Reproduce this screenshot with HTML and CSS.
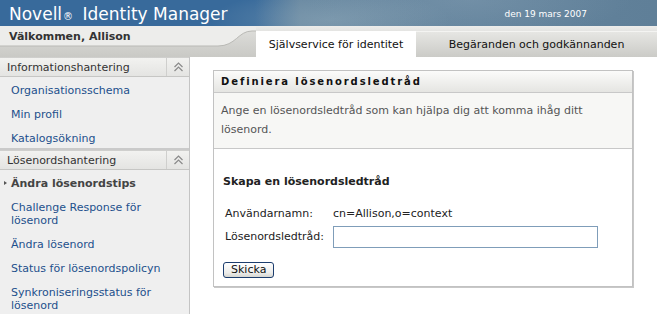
FILE: index.html
```html
<!DOCTYPE html>
<html lang="sv">
<head>
    <meta charset="UTF-8">
    <title>Novell Identity Manager</title>
    <link rel="stylesheet" href="styles.css">
</head>
<body>
    <div class="top">
        <div class="brand">Novell<span class="reg">®</span> Identity Manager</div>
        <div class="date">den 19 mars 2007</div>
    </div>

    <div class="nav">
        <div class="welcome">
            <svg class="curve" width="256" height="31" viewBox="0 0 256 31">
                <path d="M0 0 H256 V5 H252 C238 5 236 20 218 20 H0 Z" fill="#ededeb"/>
                <path d="M256 5 H252 C238 5 236 20 218 20 H0" fill="none" stroke="#b9b9b5" stroke-width="1"/>
            </svg>
            <span class="welcome-text">Välkommen, Allison</span>
        </div>
        <div class="tabs">
            <div class="tab active">Självservice för identitet</div>
            <div class="tab">Begäranden och godkännanden</div>
        </div>
    </div>

    <div class="main">
        <div class="side">
            <div class="group-head">
                <span>Informationshantering</span>
                <span class="toggle">
                    <svg width="11" height="10" viewBox="0 0 11 10"><path d="M1.5 5 L5.5 1 L9.5 5 M1.5 9 L5.5 5 L9.5 9" fill="none" stroke="#8a8a8a" stroke-width="1.2"/></svg>
                </span>
            </div>
            <div class="links">
                <a href="#">Organisationsschema</a>
                <a href="#">Min profil</a>
                <a href="#">Katalogsökning</a>
            </div>
            <div class="group-head">
                <span>Lösenordshantering</span>
                <span class="toggle">
                    <svg width="11" height="10" viewBox="0 0 11 10"><path d="M1.5 5 L5.5 1 L9.5 5 M1.5 9 L5.5 5 L9.5 9" fill="none" stroke="#8a8a8a" stroke-width="1.2"/></svg>
                </span>
            </div>
            <div class="links last">
                <a href="#" class="current">Ändra lösenordstips</a>
                <a href="#">Challenge Response för lösenord</a>
                <a href="#">Ändra lösenord</a>
                <a href="#">Status för lösenordspolicyn</a>
                <a href="#">Synkroniseringsstatus för lösenord</a>
            </div>
        </div>

        <div class="content">
            <div class="panel">
                <div class="panel-head">Definiera lösenordsledtråd</div>
                <div class="panel-desc">Ange en lösenordsledtråd som kan hjälpa dig att komma ihåg ditt lösenord.</div>
                <div class="panel-body">
                    <h2>Skapa en lösenordsledtråd</h2>
                    <div class="row">
                        <span class="label">Användarnamn:</span>
                        <span class="value">cn=Allison,o=context</span>
                    </div>
                    <div class="row">
                        <span class="label">Lösenordsledtråd:</span>
                        <input type="text" class="hint">
                    </div>
                    <button class="send">Skicka</button>
                </div>
            </div>
        </div>
    </div>
</body>
</html>
```

FILE: styles.css
```css
body {
    margin: 0;
    font-family: "DejaVu Sans", Verdana, sans-serif;
    font-size: 11px;
    background: #fff;
    color: #333;
    height: 314px;
    overflow: hidden;
    display: flex;
    flex-direction: column;
}

.top {
    flex: 0 0 26px;
    display: flex;
    align-items: center;
    justify-content: space-between;
    background:
        radial-gradient(ellipse 120px 30px at 330px 20px, rgba(150,175,190,0.45), transparent),
        radial-gradient(ellipse 160px 40px at 470px 0px, rgba(140,165,185,0.35), transparent),
        linear-gradient(90deg, #386a9b 0, #386a9b 255px, #6787a0 300px, #5f7f98 100%);
    color: #fff;
}
.brand {
    font-size: 17px;
    padding-left: 9px;
    padding-top: 1px;
}
.reg {
    font-size: 10px;
    margin: 0 4px 0 1px;
}
.date {
    font-size: 9px;
    padding-right: 70px;
    padding-top: 2px;
}

.nav {
    flex: 0 0 31px;
    display: flex;
    background: linear-gradient(#e0e0dd, #c9c9c5);
}
.welcome {
    width: 256px;
    position: relative;
}
.curve {
    position: absolute;
    left: 0;
    top: 0;
}
.welcome-text {
    position: relative;
    display: block;
    padding: 4px 0 0 9px;
    font-weight: bold;
    font-size: 11px;
    color: #333;
}
.tabs {
    flex: 1;
    display: flex;
    padding-top: 5px;
    background: linear-gradient(#ededeb 0, #e4e4e2 5px);
}
.tab {
    display: flex;
    align-items: center;
    justify-content: center;
    font-size: 11px;
    color: #111;
    flex: 1;
    background: linear-gradient(#e6e6e3, #cbcbc7);
    border-top: 1px solid #f4f4f2;
}
.tab.active {
    flex: 0 0 160px;
    background: #fff;
    border-top-color: #fff;
}

.main {
    flex: 1;
    min-height: 0;
    display: flex;
}
.side {
    flex: 0 0 189px;
    background: #efefef;
    border-right: 1px solid #c4c4c4;
}
.group-head {
    display: flex;
    justify-content: space-between;
    height: 18px;
    background: linear-gradient(#f2f2f0, #e4e4e2);
    border-top: 1px solid #cfcfcd;
    border-bottom: 1px solid #c6c6c4;
    font-size: 11px;
    color: #333;
}
.group-head span:first-child {
    padding: 3px 0 0 7px;
}
.toggle {
    width: 22px;
    border-left: 1px solid #cfcfcd;
    display: flex;
    align-items: center;
    justify-content: center;
}
.links {
    display: flex;
    flex-direction: column;
    gap: 11px;
    padding: 7px 10px 3px 11px;
    border-bottom: 2px solid #cacaca;
}
.links.last {
    border-bottom: none;
}
.links a {
    color: #1d4f8c;
    font-size: 11px;
    line-height: 13px;
    text-decoration: none;
}
.links a.current {
    color: #444;
    font-weight: bold;
    position: relative;
}
.links a.current::before {
    content: "";
    position: absolute;
    left: -7px;
    top: 4px;
    border-left: 3px solid #555;
    border-top: 2.5px solid transparent;
    border-bottom: 2.5px solid transparent;
}

.content {
    flex: 1;
    padding: 13px 0 0 23px;
}
.panel {
    width: 418px;
    border: 1px solid #c2c2c2;
    box-shadow: 1px 1px 0 #c8c8c8;
}
.panel-head {
    height: 21px;
    line-height: 21px;
    padding-left: 7px;
    font-weight: bold;
    font-size: 10px;
    letter-spacing: 1.9px;
    color: #111;
    background: linear-gradient(#fbfbfa, #e5e5e2);
    border-bottom: 1px solid #c8c8c8;
}
.panel-desc {
    background: #f7f7f5;
    color: #555;
    font-size: 11px;
    line-height: 19px;
    padding: 8px 10px 0 7px;
    border-bottom: 1px solid #c8c8c8;
    height: 47px;
}
.panel-body {
    padding: 26px 8px 8px 9px;
}
.panel-body h2 {
    margin: 0 0 14px 0;
    font-size: 11px;
    color: #222;
}
.row {
    display: flex;
    align-items: center;
    height: 23px;
    padding-left: 2px;
    font-size: 11px;
    color: #222;
}
.label {
    width: 108px;
}
.hint {
    box-sizing: border-box;
    width: 265px;
    height: 22px;
    margin: 0;
    padding: 0 2px;
    border: 1px solid #7f9db9;
    font-family: inherit;
    font-size: 11px;
}
.send {
    margin-top: 14px;
    height: 16px;
    padding: 0 7px;
    font-family: inherit;
    font-size: 11px;
    line-height: 12px;
    color: #111;
    border: 1px solid #1c3d6e;
    border-radius: 3px;
    background: linear-gradient(#fff, #ececea 70%, #d6d6d0);
}
```
